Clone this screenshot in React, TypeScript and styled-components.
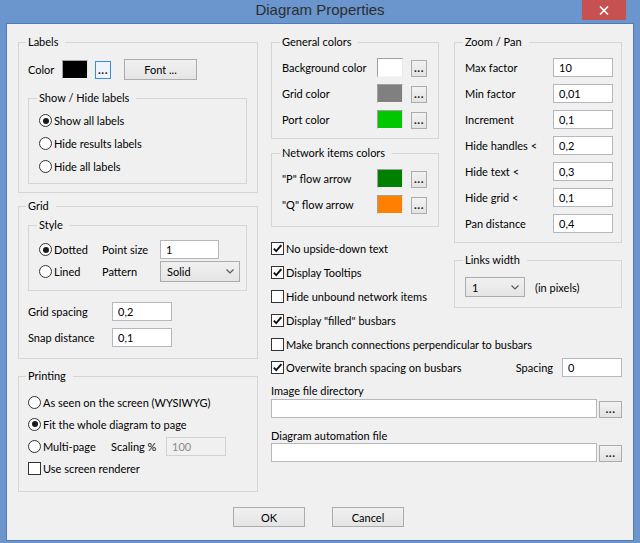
import React from 'react';
import styled, { createGlobalStyle } from 'styled-components';

const GlobalStyle = createGlobalStyle`
  html, body { margin: 0; padding: 0; background: #6a95cd; }
  body { font-family: Lato, "Liberation Sans", Arial, sans-serif; font-size: 11px; color: #000; }
  * { box-sizing: border-box; }
`;

const Window = styled.div`
  width: 640px;
  height: 543px;
  background: #6a95cd;
  display: flex;
  flex-direction: column;
  overflow: hidden;
`;

const TitleBar = styled.div`
  height: 23px;
  flex: none;
  display: grid;
  grid-template-columns: 1fr auto 1fr;
  align-items: start;
`;

const Title = styled.div`
  grid-column: 2;
  font-family: "Liberation Sans", Arial, sans-serif;
  font-size: 15px;
  line-height: 20px;
  color: #2d2d2d;
`;

const CloseButton = styled.div`
  grid-column: 3;
  justify-self: end;
  width: 44px;
  height: 20px;
  margin-right: 14px;
  background: #c75050;
  display: flex;
  align-items: center;
  justify-content: center;
`;

const Client = styled.div`
  flex: 1;
  margin: 0 6px 2px;
  border: 1px solid #4f7cb6;
  background: #f0f0f0;
  padding: 11px 11px 0 11px;
  display: flex;
  flex-direction: column;
`;

const MainGrid = styled.div`
  display: grid;
  grid-template-columns: 240px 351px;
  column-gap: 13px;
  align-items: start;
`;

const Column = styled.div`
  display: flex;
  flex-direction: column;
  min-width: 0;
`;

const TopPair = styled.div`
  display: grid;
  grid-template-columns: 168px 168px;
  column-gap: 15px;
  align-items: start;
`;

const Group = styled.fieldset<{ $pad: string; $mt?: number }>`
  margin: ${p => p.$mt ?? 0}px 0 0 0;
  padding: ${p => p.$pad};
  border: 1px solid #d5d5d5;
  min-width: 0;
`;

const Legend = styled.legend`
  padding: 0 7px 0 2px;
  margin-left: -2px;
  line-height: 14px;
  font-size: 11px;
`;

const Stack = styled.div<{ $gap: number; $mt?: number }>`
  display: flex;
  flex-direction: column;
  gap: ${p => p.$gap}px;
  margin-top: ${p => p.$mt ?? 0}px;
`;

const Row = styled.div<{ $h: number; $mt?: number }>`
  display: flex;
  align-items: center;
  height: ${p => p.$h}px;
  margin-top: ${p => p.$mt ?? 0}px;
`;

const Text = styled.span<{ $w?: number; $ml?: number }>`
  flex: ${p => (p.$w ? 'none' : '1')};
  width: ${p => (p.$w ? `${p.$w}px` : 'auto')};
  margin-left: ${p => p.$ml ?? 0}px;
  white-space: nowrap;
  line-height: 15px;
`;

const SpacingLabel = styled.span`
  flex: 1;
  text-align: right;
  padding-right: 9px;
  white-space: nowrap;
  line-height: 15px;
`;

const Swatch = styled.div<{ $color: string }>`
  width: 26px;
  height: 19px;
  flex: none;
  background: ${p => p.$color};
  border: 1px solid;
  border-color: #a0a0a0 #e8e8e8 #f4f4f4 #a0a0a0;
`;

const DotsButton = styled.div<{ $focused?: boolean; $w?: number; $h?: number; $ml?: number }>`
  width: ${p => p.$w ?? 16}px;
  height: ${p => p.$h ?? 17}px;
  margin-left: ${p => p.$ml ?? 8}px;
  flex: none;
  align-self: ${p => (p.$focused ? 'center' : 'flex-end')};
  border: 1px solid ${p => (p.$focused ? '#3c8ad8' : '#acacac')};
  background: ${p => (p.$focused ? '#edf4fb' : 'linear-gradient(#f2f2f2, #e3e3e3)')};
  display: flex;
  align-items: flex-end;
  justify-content: center;
  font-size: 12px;
  line-height: 12px;
  padding-bottom: 2px;
  letter-spacing: 0.5px;
  font-weight: bold;
  color: #222;
`;

const PushButton = styled.div<{ $w: number; $h: number; $ml?: number }>`
  width: ${p => p.$w}px;
  height: ${p => p.$h}px;
  margin-left: ${p => p.$ml ?? 0}px;
  flex: none;
  border: 1px solid #acacac;
  background: linear-gradient(#f0f0f0, #e5e5e5);
  display: flex;
  align-items: center;
  justify-content: center;
  font-size: 11px;
`;

const TextBox = styled.input<{ $w?: number }>`
  width: ${p => (p.$w ? `${p.$w}px` : 'auto')};
  flex: ${p => (p.$w ? 'none' : '1')};
  min-width: 0;
  height: 19px;
  margin: 0;
  border: 1px solid #b5b7bd;
  background: #fff;
  padding: 0 5px;
  font-family: inherit;
  font-size: 11px;
  color: #000;
  outline: none;
  &:disabled {
    background: #f0f0f0;
    border-color: #d2d2d2;
    color: #8a8a8a;
  }
`;

const Combo = styled.div<{ $w: number; $h: number }>`
  width: ${p => p.$w}px;
  height: ${p => p.$h}px;
  flex: none;
  border: 1px solid #acacac;
  background: linear-gradient(#f0f0f0, #e5e5e5);
  display: flex;
  align-items: center;
  justify-content: space-between;
  padding: 0 5px 0 6px;
  font-size: 11px;
`;

const OptionRow = styled.label<{ $h?: number }>`
  display: flex;
  align-items: center;
  gap: 2px;
  height: ${p => (p.$h ? `${p.$h}px` : 'auto')};
  white-space: nowrap;
  line-height: 15px;
`;

const RadioCircle = styled.span`
  width: 13px;
  height: 13px;
  flex: none;
  border-radius: 50%;
  border: 1px solid #333;
  background: #fff;
  display: flex;
  align-items: center;
  justify-content: center;
`;

const RadioDot = styled.span`
  width: 6px;
  height: 6px;
  border-radius: 50%;
  background: #1a1a1a;
`;

const CheckSquare = styled.span`
  width: 13px;
  height: 13px;
  flex: none;
  border: 1px solid #333;
  background: #fff;
  display: flex;
  align-items: center;
  justify-content: center;
`;

const StyleGrid = styled.div`
  display: grid;
  grid-template-columns: 63px 58px 80px;
  grid-template-rows: 19px 21px;
  row-gap: 2px;
  align-items: center;
`;

const PairGrid = styled.div<{ $cols: string; $rows: string; $gap: number; $mt?: number }>`
  display: grid;
  grid-template-columns: ${p => p.$cols};
  grid-auto-rows: ${p => p.$rows};
  row-gap: ${p => p.$gap}px;
  align-items: center;
  margin-top: ${p => p.$mt ?? 0}px;
`;

const FieldLabel = styled.div<{ $mt: number }>`
  line-height: 15px;
  margin-top: ${p => p.$mt}px;
`;

const PathRow = styled.div<{ $mt: number }>`
  display: flex;
  align-items: center;
  margin-top: ${p => p.$mt}px;
`;

const ButtonBar = styled.div`
  display: flex;
  justify-content: center;
  gap: 27px;
  margin-top: 15px;
  padding-right: 3px;
`;

const Chevron = () => (
  <svg width="8" height="5" viewBox="0 0 8 5">
    <path d="M0.5 0.5 L4 4 L7.5 0.5" fill="none" stroke="#5a5a5a" strokeWidth="1.2" />
  </svg>
);

const Radio = ({ checked, h, children }: { checked?: boolean; h?: number; children: React.ReactNode }) => (
  <OptionRow $h={h}>
    <RadioCircle>{checked && <RadioDot />}</RadioCircle>
    <span>{children}</span>
  </OptionRow>
);

const Check = ({ checked, h, children }: { checked?: boolean; h?: number; children: React.ReactNode }) => (
  <OptionRow $h={h}>
    <CheckSquare>
      {checked && (
        <svg width="11" height="11" viewBox="0 0 11 11">
          <path d="M1.8 5.6 L4.2 8.2 L9.4 2.2" fill="none" stroke="#111" strokeWidth="1.9" />
        </svg>
      )}
    </CheckSquare>
    <span>{children}</span>
  </OptionRow>
);

const ColorRow = ({ label, color }: { label: string; color: string }) => (
  <Row $h={19}>
    <Text>{label}</Text>
    <Swatch $color={color} />
    <DotsButton>...</DotsButton>
  </Row>
);

const zoomRows: [string, string][] = [
  ['Max factor', '10'],
  ['Min factor', '0,01'],
  ['Increment', '0,1'],
  ['Hide handles <', '0,2'],
  ['Hide text <', '0,3'],
  ['Hide grid <', '0,1'],
  ['Pan distance', '0,4'],
];

export default function App() {
  return (
    <>
      <GlobalStyle />
      <Window>
        <TitleBar>
          <Title>Diagram Properties</Title>
          <CloseButton>
            <svg width="10" height="9" viewBox="0 0 10 9">
              <path d="M1 0.5 L9 8.5 M9 0.5 L1 8.5" stroke="#fff" strokeWidth="1.6" />
            </svg>
          </CloseButton>
        </TitleBar>
        <Client>
          <MainGrid>
            <Column>
              <Group $pad="10px 10px 8px 9px">
                <Legend>Labels</Legend>
                <Row $h={21}>
                  <Text $w={34}>Color</Text>
                  <Swatch $color="#000" />
                  <DotsButton $focused $h={18} $ml={7}>...</DotsButton>
                  <PushButton $w={73} $h={21} $ml={13}>Font ...</PushButton>
                </Row>
                <Group $pad="4px 10px 5px 10px" $mt={11}>
                  <Legend>Show / Hide labels</Legend>
                  <Radio checked h={23}>Show all labels</Radio>
                  <Radio h={23}>Hide results labels</Radio>
                  <Radio h={23}>Hide all labels</Radio>
                </Group>
              </Group>

              <Group $pad="5px 10px 11px 9px" $mt={6}>
                <Legend>Grid</Legend>
                <Group $pad="8px 10px 8px 10px">
                  <Legend>Style</Legend>
                  <StyleGrid>
                    <Radio checked>Dotted</Radio>
                    <Text>Point size</Text>
                    <TextBox $w={59} readOnly defaultValue="1" />
                    <Radio>Lined</Radio>
                    <Text>Pattern</Text>
                    <Combo $w={80} $h={21}>
                      <span>Solid</span>
                      <Chevron />
                    </Combo>
                  </StyleGrid>
                </Group>
                <PairGrid $cols="84px 60px" $rows="19px" $gap={7} $mt={11}>
                  <Text>Grid spacing</Text>
                  <TextBox $w={60} readOnly defaultValue="0,2" />
                  <Text>Snap distance</Text>
                  <TextBox $w={60} readOnly defaultValue="0,1" />
                </PairGrid>
              </Group>

              <Group $pad="8px 10px 12px 9px" $mt={10}>
                <Legend>Printing</Legend>
                <Radio h={22}>As seen on the screen (WYSIWYG)</Radio>
                <Radio checked h={22}>Fit the whole diagram to page</Radio>
                <PairGrid $cols="83px 55px 60px" $rows="22px" $gap={0}>
                  <Radio>Multi-page</Radio>
                  <Text>Scaling %</Text>
                  <TextBox $w={60} disabled defaultValue="100" />
                </PairGrid>
                <Check h={22}>Use screen renderer</Check>
              </Group>
            </Column>

            <Column>
              <TopPair>
                <Column>
                  <Group $pad="9px 11px 9px 10px">
                    <Legend>General colors</Legend>
                    <Stack $gap={7}>
                      <ColorRow label="Background color" color="#ffffff" />
                      <ColorRow label="Grid color" color="#808080" />
                      <ColorRow label="Port color" color="#00c800" />
                    </Stack>
                  </Group>
                  <Group $pad="9px 11px 12px 10px" $mt={7}>
                    <Legend>Network items colors</Legend>
                    <Stack $gap={7}>
                      <ColorRow label={'"P" flow arrow'} color="#008000" />
                      <ColorRow label={'"Q" flow arrow'} color="#ff8000" />
                    </Stack>
                  </Group>
                  <Stack $gap={0} $mt={9}>
                    <Check checked h={24}>No upside-down text</Check>
                    <Check checked h={24}>Display Tooltips</Check>
                    <Check h={24}>Hide unbound network items</Check>
                  </Stack>
                </Column>
                <Column>
                  <Group $pad="9px 10px 9px 10px">
                    <Legend>Zoom / Pan</Legend>
                    <PairGrid $cols="88px 60px" $rows="19px" $gap={7}>
                      {zoomRows.map(([label, value]) => (
                        <React.Fragment key={label}>
                          <Text>{label}</Text>
                          <TextBox $w={60} readOnly defaultValue={value} />
                        </React.Fragment>
                      ))}
                    </PairGrid>
                  </Group>
                  <Group $pad="10px 10px 10px 10px" $mt={10}>
                    <Legend>Links width</Legend>
                    <Row $h={20}>
                      <Combo $w={60} $h={20}>
                        <span>1</span>
                        <Chevron />
                      </Combo>
                      <Text $ml={10}>(in pixels)</Text>
                    </Row>
                  </Group>
                </Column>
              </TopPair>
              <Check checked h={24}>Display "filled" busbars</Check>
              <Check h={24}>Make branch connections perpendicular to busbars</Check>
              <Row $h={22}>
                <Check checked>Overwite branch spacing on busbars</Check>
                <SpacingLabel>Spacing</SpacingLabel>
                <TextBox $w={60} readOnly defaultValue="0" />
              </Row>
              <FieldLabel $mt={5}>Image file directory</FieldLabel>
              <PathRow $mt={1}>
                <TextBox readOnly defaultValue="" />
                <DotsButton $w={23} $h={17} $ml={2}>...</DotsButton>
              </PathRow>
              <FieldLabel $mt={10}>Diagram automation file</FieldLabel>
              <PathRow $mt={0}>
                <TextBox readOnly defaultValue="" />
                <DotsButton $w={23} $h={17} $ml={2}>...</DotsButton>
              </PathRow>
            </Column>
          </MainGrid>
          <ButtonBar>
            <PushButton $w={72} $h={20}>OK</PushButton>
            <PushButton $w={72} $h={20}>Cancel</PushButton>
          </ButtonBar>
        </Client>
      </Window>
    </>
  );
}
